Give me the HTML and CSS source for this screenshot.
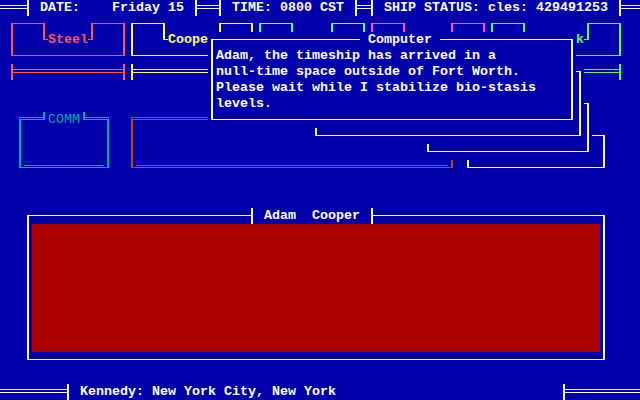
FILE: index.html
```html
<!DOCTYPE html>
<html>
<head>
<meta charset="utf-8">
<title>Timeship</title>
<link rel="stylesheet" href="styles.css">
</head>
<body>
<div class="screen">
  <div class="bar a-top">
    <i class="h2 w3"></i><i class="t2l"></i><span class="txt"> DATE:    Friday 15 </span><i class="t2r"></i><i class="h2 w2"></i><i class="t2l"></i><span class="txt"> TIME: 0800 CST </span><i class="t2r"></i><i class="h2 w1"></i><i class="t2l"></i><span class="txt"> SHIP STATUS: cles: 429491253 </span><i class="t2r"></i><i class="h2 grow"></i>
  </div>

  <div class="frame red a-p-steel"></div>
  <div class="notch red a-n-steel"></div>
  <div class="label red a-l-steel">Steel</div>
  <div class="bar red a-s-steel"><i class="t2r"></i><i class="h2 grow"></i><i class="t2l"></i></div>

  <div class="frame yel a-p-coop"></div>
  <div class="notch yel a-n-coop"></div>
  <div class="label yel a-l-coop">Cooper</div>
  <div class="bar yel a-s-coop"><i class="t2r"></i><i class="h2 grow"></i><i class="t2l"></i></div>

  <div class="frame cyn a-p-cyan"></div>
  <div class="notch cyn a-n-cyan"></div>
  <div class="bar cyn a-s-cyan"><i class="t2r"></i><i class="h2 grow"></i><i class="t2l"></i></div>

  <div class="frame mag a-p-mag"></div>
  <div class="notch mag a-n-mag"></div>
  <div class="bar mag a-s-mag"><i class="t2r"></i><i class="h2 grow"></i><i class="t2l"></i></div>

  <div class="frame grn a-p-grn"></div>
  <div class="notch grn a-n-grn"></div>
  <div class="label grn a-l-grn">k</div>
  <div class="bar grn a-s-grn"><i class="t2r"></i><i class="h2 grow"></i><i class="t2l"></i></div>

  <div class="dbox dcy a-comm"></div>
  <div class="dlabel dcy a-l-comm">COMM</div>

  <div class="dbox brn a-brown"></div>

  <div class="win a-w-d"><div class="wframe"></div></div>
  <div class="win a-w-c"><div class="wframe"></div></div>
  <div class="win a-w-b"><div class="wframe"></div></div>
  <div class="win a-w-comp">
    <div class="wframe">
      <p class="msg">Adam, the timeship has arrived in a
null-time space outside of Fort Worth.
Please wait while I stabilize bio-stasis
levels.</p>
    </div>
  </div>
  <div class="wtitle a-t-comp"> Computer </div>

  <div class="win a-big"><div class="wframe"><div class="redfill"></div></div></div>
  <div class="bar wtitle a-t-big"><i class="t1l"></i><span class="txt"> Adam  Cooper </span><i class="t1r"></i></div>

  <div class="bar a-foot">
    <i class="h2 w8"></i><i class="t2l"></i><span class="txt"> Kennedy: New York City, New York</span><i class="grow"></i><i class="t2r"></i><i class="h2 w9"></i>
  </div>
</div>
</body>
</html>
```

FILE: styles.css
```css
html, body {
  margin: 0;
  padding: 0;
  background: #0000aa;
}

body {
  width: 640px;
  height: 400px;
  overflow: hidden;
}

.screen {
  display: grid;
  grid-template-columns: repeat(80, 8px);
  grid-template-rows: repeat(25, 16px);
  width: 640px;
  height: 400px;
  background: #0000aa;
  color: #ffffff;
  font-family: "Liberation Mono", "DejaVu Sans Mono", monospace;
  font-size: 13.333px;
  font-weight: bold;
  line-height: 16px;
}

/* colours */
.red { color: #ff5555; }
.yel { color: #ffff55; }
.cyn { color: #55ffff; }
.mag { color: #ff55ff; }
.grn { color: #55ff55; }
.dcy { color: #00aaaa; }
.brn { color: #aa5500; }

/* line-drawing tiles */
.bar {
  display: flex;
  height: 16px;
}

.bar i {
  display: block;
  height: 16px;
  flex: none;
}

.bar .grow { flex: 1 1 auto; }
.w1 { width: 8px; }
.w2 { width: 16px; }
.w3 { width: 24px; }
.w8 { width: 64px; }
.w9 { width: 72px; }

.txt { white-space: pre; }

.h2 {
  background:
    linear-gradient(currentColor, currentColor) 0 5px / 100% 1px no-repeat,
    linear-gradient(currentColor, currentColor) 0 8px / 100% 1px no-repeat;
}

.bar .t2l {
  width: 8px;
  background:
    linear-gradient(currentColor, currentColor) 3px 0 / 2px 100% no-repeat,
    linear-gradient(currentColor, currentColor) 0 5px / 3px 1px no-repeat,
    linear-gradient(currentColor, currentColor) 0 8px / 3px 1px no-repeat;
}

.bar .t2r {
  width: 8px;
  background:
    linear-gradient(currentColor, currentColor) 3px 0 / 2px 100% no-repeat,
    linear-gradient(currentColor, currentColor) 5px 5px / 3px 1px no-repeat,
    linear-gradient(currentColor, currentColor) 5px 8px / 3px 1px no-repeat;
}

.bar .t1l {
  width: 8px;
  background:
    linear-gradient(currentColor, currentColor) 3px 0 / 2px 100% no-repeat,
    linear-gradient(currentColor, currentColor) 0 7px / 3px 1px no-repeat,
    #0000aa;
}

.bar .t1r {
  width: 8px;
  background:
    linear-gradient(currentColor, currentColor) 3px 0 / 2px 100% no-repeat,
    linear-gradient(currentColor, currentColor) 5px 7px / 3px 1px no-repeat,
    #0000aa;
}

/* single line boxes */
.frame {
  margin: 7px 3px 8px 3px;
  border-style: solid;
  border-color: currentColor;
  border-width: 1px 2px;
}

.notch {
  margin: 7px 3px 8px 3px;
  border-style: solid;
  border-color: currentColor;
  border-width: 0 2px 1px 2px;
  background: #0000aa;
}

.label {
  background: #0000aa;
  white-space: pre;
  overflow: hidden;
}

/* double-top boxes */
.dbox {
  margin: 5px 3px 8px 3px;
  border-color: currentColor;
  border-style: double solid solid solid;
  border-width: 3px 2px 1px 2px;
  background: linear-gradient(currentColor, currentColor) 3px calc(100% - 1px) / calc(100% - 6px) 1px no-repeat;
}

.dlabel {
  margin: 0 3px;
  padding-left: 5px;
  font-weight: normal;
  background:
    linear-gradient(currentColor, currentColor) 0 0 / 2px 8px no-repeat,
    linear-gradient(currentColor, currentColor) 100% 0 / 2px 8px no-repeat,
    #0000aa;
}

/* windows */
.win {
  display: grid;
  background: #0000aa;
  color: #ffffff;
}

.wframe {
  margin: 7px 3px 8px 3px;
  border: solid currentColor;
  border-width: 1px 2px;
  display: flex;
  flex-direction: column;
}

.msg {
  margin: 0;
  padding: 8px 0 0 3px;
  white-space: pre;
}

.wtitle {
  background: #0000aa;
  color: #ffffff;
  white-space: pre;
}

.redfill {
  flex: 1 1 auto;
  margin: 8px 3px 7px 3px;
  background: #aa0000;
}

/* placements: row-start / col-start / row-end / col-end */
.a-top { grid-area: 1 / 1 / 2 / 81; }

.a-p-steel { grid-area: 2 / 2 / 5 / 17; }
.a-n-steel { grid-area: 2 / 6 / 4 / 13; }
.a-l-steel { grid-area: 3 / 7 / 4 / 12; }
.a-s-steel { grid-area: 5 / 2 / 6 / 17; }

.a-p-coop { grid-area: 2 / 17 / 5 / 33; }
.a-n-coop { grid-area: 2 / 21 / 4 / 29; }
.a-l-coop { grid-area: 3 / 22 / 4 / 28; }
.a-s-coop { grid-area: 5 / 17 / 6 / 33; }

.a-p-cyan { grid-area: 2 / 33 / 5 / 47; }
.a-n-cyan { grid-area: 2 / 37 / 4 / 43; }
.a-s-cyan { grid-area: 5 / 33 / 6 / 47; }

.a-p-mag { grid-area: 2 / 47 / 5 / 62; }
.a-n-mag { grid-area: 2 / 51 / 4 / 58; }
.a-s-mag { grid-area: 5 / 47 / 6 / 62; }

.a-p-grn { grid-area: 2 / 62 / 5 / 79; }
.a-n-grn { grid-area: 2 / 66 / 4 / 75; }
.a-l-grn { grid-area: 3 / 73 / 4 / 74; }
.a-s-grn { grid-area: 5 / 62 / 6 / 79; }

.a-comm { grid-area: 8 / 3 / 12 / 15; }
.a-l-comm { grid-area: 8 / 6 / 9 / 12; }
.a-brown { grid-area: 8 / 17 / 12 / 58; }

.a-w-d { grid-area: 9 / 59 / 12 / 77; }
.a-w-c { grid-area: 7 / 54 / 11 / 75; }
.a-w-b { grid-area: 5 / 40 / 10 / 74; }
.a-w-comp { grid-area: 3 / 27 / 9 / 73; }
.a-t-comp { grid-area: 3 / 46 / 4 / 56; }

.a-big { grid-area: 14 / 4 / 24 / 77; }
.a-t-big { grid-area: 14 / 32 / 15 / 48; }

.a-foot { grid-area: 25 / 1 / 26 / 81; }
```
